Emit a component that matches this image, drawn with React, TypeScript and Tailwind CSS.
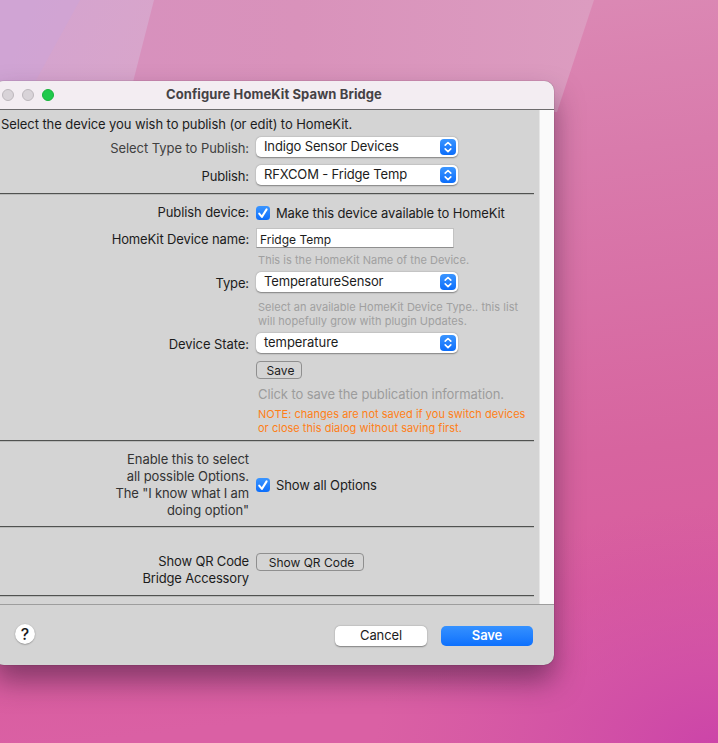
import React from "react";

const Popup = ({ children, t }: { children: string; t: string }) => (
  <div className="flex h-5 w-[202px] items-center justify-between rounded-[5px] bg-white pr-[2px] pl-2 shadow-[0_0.5px_1.5px_rgba(0,0,0,0.4)]">
    <span className={`whitespace-nowrap ${t}`}>{children}</span>
    <span className="flex h-4 w-4 items-center justify-center rounded-[4px] bg-linear-to-b from-[#3a95ff] to-[#0a6dfb]">
      <svg width="16" height="16" viewBox="0 0 16 16" fill="none" stroke="white" strokeWidth="1.6" strokeLinecap="round" strokeLinejoin="round">
        <path d="M5.2 6.2 8 3.5l2.8 2.7M5.2 9.9 8 12.6l2.8-2.7" />
      </svg>
    </span>
  </div>
);

const Check = () => (
  <span className="mr-[6px] flex h-[14px] w-[14px] rounded-[3.5px] bg-linear-to-b from-[#3a95ff] to-[#0a6dfb]">
    <svg width="14" height="14" viewBox="0 0 14 14" fill="none" stroke="white" strokeWidth="2" strokeLinecap="round" strokeLinejoin="round">
      <path d="M3.2 7.6 5.9 10.9 10.6 3.4" />
    </svg>
  </span>
);

const Label = ({ children, c }: { children?: React.ReactNode; c: string }) => (
  <div className={`w-[255px] shrink-0 text-right whitespace-nowrap leading-[17px] ${c}`}>{children}</div>
);

const Rule = ({ c }: { c: string }) => (
  <div className={`h-[2px] w-[540px] border-t border-b border-t-[#505250] border-b-[#b9bab9] ${c}`} />
);

const Button = ({ children, c }: { children: string; c: string }) => (
  <div className={`flex h-[18px] items-center justify-center rounded-[4px] border border-[#8f8f8f] pt-[2px] text-[12px] tracking-normal whitespace-nowrap ${c}`}>
    {children}
  </div>
);

const Wallpaper = () => (
  <svg className="absolute inset-0" width="718" height="743" viewBox="0 0 718 743">
    <defs>
      <linearGradient id="base" x1="0" y1="0" x2="0.12" y2="1">
        <stop offset="0" stopColor="#dc8fb8" />
        <stop offset="0.3" stopColor="#d97bac" />
        <stop offset="0.7" stopColor="#d7649f" />
        <stop offset="0.88" stopColor="#d95d9f" />
        <stop offset="1" stopColor="#da60a4" />
      </linearGradient>
      <radialGradient id="corner" gradientUnits="userSpaceOnUse" cx="718" cy="760" r="300" gradientTransform="translate(718 760) scale(1.15 0.85) translate(-718 -760)">
        <stop offset="0" stopColor="#cb42a9" />
        <stop offset="0.35" stopColor="#cd47a7" stopOpacity="0.65" />
        <stop offset="1" stopColor="#d050a4" stopOpacity="0" />
      </radialGradient>
      <linearGradient id="pane" x1="0" y1="0" x2="1" y2="0">
        <stop offset="0" stopColor="#d690bf" />
        <stop offset="0.5" stopColor="#d992bb" />
        <stop offset="1" stopColor="#dc9cc0" />
      </linearGradient>
      <linearGradient id="lilac" x1="0" y1="0" x2="1" y2="0.3">
        <stop offset="0" stopColor="#d3a3d0" />
        <stop offset="1" stopColor="#d8a5cb" />
      </linearGradient>
    </defs>
    <rect width="718" height="743" fill="url(#base)" />
    <rect width="718" height="743" fill="url(#corner)" />
    <path d="M0 0H594L557 112H0Z" fill="url(#pane)" />
    <path d="M0 0H154L133 82V112H0Z" fill="url(#lilac)" />
    <path d="M0 0H80L35 82H0Z" fill="#cfa4d5" fillOpacity="0.7" />
  </svg>
);

export default function App() {
  return (
    <div className="relative h-[743px] w-[718px] overflow-hidden pt-[81px] font-[Inter,sans-serif] text-[13px] tracking-[-0.12px] text-[#1c1c1c]">
      <Wallpaper />
      <div className="relative -ml-[6px] flex h-[584px] w-[560px] flex-col overflow-hidden rounded-[10px] bg-[#d4d4d4] shadow-[0_0_1px_rgba(0,0,0,0.6),0_16px_28px_rgba(50,20,50,0.5)]">
        <div className="flex h-7 shrink-0 items-center bg-[#f3edf2]">
          <div className="flex gap-2 pl-2">
            <i className="h-3 w-3 rounded-full border border-[#bdb8bd] bg-[#d8d3d8]" />
            <i className="h-3 w-3 rounded-full border border-[#bdb8bd] bg-[#d8d3d8]" />
            <i className="h-3 w-3 rounded-full border border-[#17b53b] bg-[#20c94c]" />
          </div>
          <div className="ml-[112px] text-[13px] font-bold tracking-[0.1px] whitespace-nowrap text-[#454245]">Configure HomeKit Spawn Bridge</div>
        </div>
        <div className="flex h-[495px] shrink-0 border-t border-[#6d6b6d]">
          <div className="flex w-[545px] shrink-0 flex-col">
            <div className="mt-[6px] h-[17px] pl-[7px] leading-[17px] tracking-[-0.08px] whitespace-nowrap">Select the device you wish to publish (or edit) to HomeKit.</div>
            <div className="mt-[4px] flex h-5 gap-[7px]"><Label c="pt-[3px] tracking-[-0.06px] text-[#404040]">Select Type to Publish:</Label><Popup t="tracking-[-0.14px]">Indigo Sensor Devices</Popup></div>
            <div className="mt-[8px] flex h-5 gap-[7px]"><Label c="pt-[3px] tracking-[-0.13px]">Publish:</Label><Popup t="tracking-[-0.15px]">RFXCOM - Fridge Temp</Popup></div>
            <Rule c="mt-[8px]" />
            <div className="mt-[9px] flex h-[18px] items-center gap-[7px]"><Label c="pb-px tracking-[-0.1px]">Publish device:</Label><div className="flex items-center whitespace-nowrap"><Check /><span className="h-[17px] leading-[17px]">Make this device available to HomeKit</span></div></div>
            <div className="mt-[6px] flex h-5 gap-[7px]"><Label c="pt-[3px] tracking-[-0.13px]">HomeKit Device name:</Label><div className="flex h-5 w-[198px] items-center border border-[#c2c2c2] border-b-[#8f8f8f] bg-white pt-[4px] pl-[3px] text-[12px] tracking-normal">Fridge Temp</div></div>
            <div className="mt-[5px] h-[14px] pl-[264px] text-[11px] leading-[14px] tracking-[0.03px] whitespace-nowrap text-[#a0a0a0]">This is the HomeKit Name of the Device.</div>
            <div className="mt-[5px] flex h-5 gap-[7px]"><Label c="pt-[3px] tracking-[-0.13px]">Type:</Label><Popup t="">TemperatureSensor</Popup></div>
            <div className="mt-[8px] h-[28px] pl-[264px] text-[11px] leading-[14px] tracking-[0.04px] whitespace-nowrap text-[#a0a0a0]">Select an available HomeKit Device Type.. this list<br />will hopefully grow with plugin Updates.</div>
            <div className="mt-[5px] flex h-5 gap-[7px]"><Label c="pt-[3px] tracking-[-0.07px]">Device State:</Label><Popup t="tracking-[-0.07px]">temperature</Popup></div>
            <div className="mt-[8px] pl-[262px]"><Button c="w-[46px] pl-[3px]">Save</Button></div>
            <div className="mt-[7px] h-[17px] pl-[264px] leading-[17px] tracking-[-0.09px] whitespace-nowrap text-[#9c9c9c]">Click to save the publication information.</div>
            <div className="mt-[4px] h-[28px] pl-[264px] text-[11px] leading-[14px] tracking-[0.02px] whitespace-nowrap text-[#ff7f17]">NOTE: changes are not saved if you switch devices<br />or close this dialog without saving first.</div>
            <Rule c="mt-[5px]" />
            <div className="mt-[9px] flex h-[68px] items-center gap-[7px]"><Label c="tracking-[-0.06px] text-[#333]">Enable this to select<br />all possible Options.<br /><span className="tracking-[-0.15px]">The "I know what I am</span><br />doing option"</Label><div className="flex items-center whitespace-nowrap"><Check /><span className="h-[17px] leading-[17px]">Show all Options</span></div></div>
            <Rule c="mt-[7px]" />
            <div className="mt-[25px] flex h-[34px] gap-[7px]"><Label c="tracking-[-0.17px]">Show QR Code<br />Bridge Accessory</Label><Button c="w-[108px] pl-[3px]">Show QR Code</Button></div>
            <Rule c="mt-[8px]" />
          </div>
          <div className="w-[15px] border-l border-[#e6e6e6] bg-[#fafafa]" />
        </div>
        <div className="flex h-[61px] shrink-0 border-t border-[#9d9d9d]">
          <div className="mt-[19px] ml-[21px] flex h-5 w-5 items-center justify-center rounded-full bg-white text-[16px] font-medium shadow-[0_0.5px_1.5px_rgba(0,0,0,0.4)]">?</div>
          <div className="mt-[21px] ml-[300px] flex h-5 w-[92px] items-center justify-center rounded-[5px] bg-white shadow-[0_0.5px_1.5px_rgba(0,0,0,0.4)]">Cancel</div>
          <div className="mt-[21px] ml-[14px] flex h-5 w-[92px] items-center justify-center rounded-[5px] bg-linear-to-b from-[#3591ff] to-[#0c70fd] font-semibold text-white">Save</div>
        </div>
      </div>
    </div>
  );
}
